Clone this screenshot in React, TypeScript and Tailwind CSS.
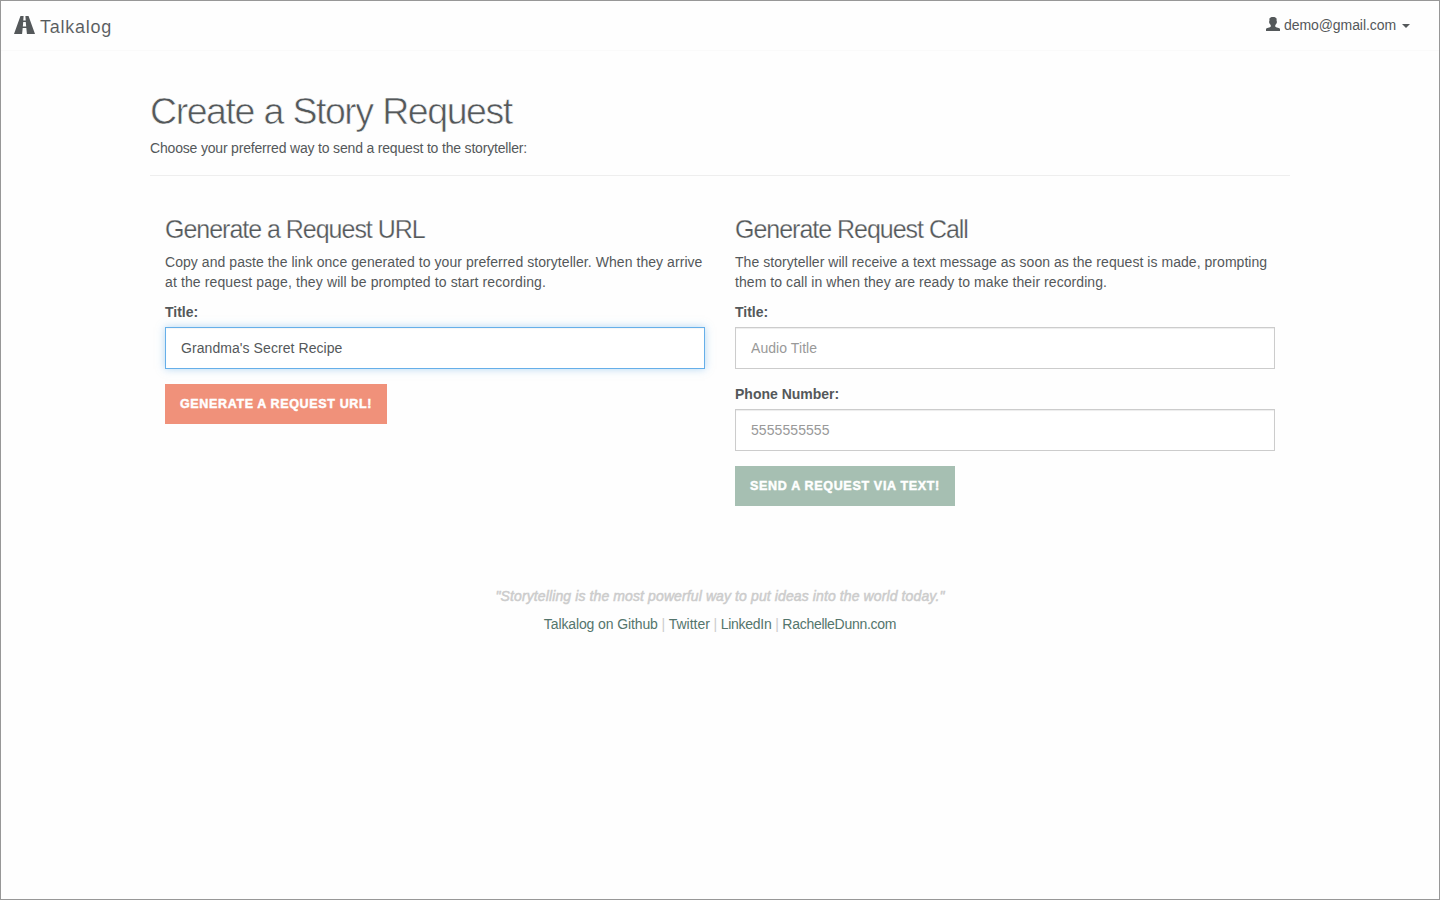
import type { ReactNode } from 'react';

const userPath =
  'M4.600 0.5C5.600 -0.100 8.400 -0.100 9.400 0.500L10.600 1.600V4.200L11 4.600L10.700 6.300L10 6.900L9.200 8.600V9.500L10.100 10.200L13.400 11.300L14 12.100V14H0V12.100L0.600 11.300L3.900 10.200L4.800 9.500V8.600L4 6.900L3.300 6.300L3 4.600L3.400 4.200V1.600z';

function Field({ label, children }: { label: string; children: ReactNode }) {
  return (
    <label className="mb-[15px] block">
      <span className="mb-[5px] block font-bold">{label}</span>
      {children}
    </label>
  );
}

const input =
  'block h-[42px] w-full border bg-white px-[15px] text-[14px] tracking-[0.07px] outline-none placeholder:text-[#999999]';
const idle = 'border-[#cccccc] shadow-[inset_0_1px_1px_rgba(0,0,0,0.075)]';
const focused = 'border-[#66afe9] shadow-[inset_0_1px_1px_rgba(0,0,0,0.04),0_0_8px_rgba(102,175,233,0.5)]';
const button = 'h-10 pl-[15px] text-[12.5px] font-bold text-white [-webkit-text-stroke:0.45px_#ffffff] text-left';
const heading = 'text-[25px] leading-[28px] tracking-[-1.02px] [-webkit-text-stroke:0.25px_#fefefe]';

export default function App() {
  return (
    <div className="h-[900px] w-full border border-[#979797] bg-[#fefefe] font-['Liberation_Sans',Arial,sans-serif] text-[14px] leading-[20px] text-[#54585a]">
      <header className="flex h-[50px] items-start justify-between border-b border-[#fafafa] pl-3 pr-[29px]">
        <a className="flex pt-[14px]">
          <svg className="ml-px mt-px h-[18px] w-[21px]" viewBox="-14 0 1400 1200" fill="currentColor">
            <path
              fillRule="evenodd"
              d="M-14 1200l431 -1200h209l-21 300h162l-20 -300h208l431 1200h-538l-41 -400h-242l-40 400zM574 700h224l-27 -300h-170z"
            />
          </svg>
          <span className="ml-[5px] mt-[2px] text-[18px] tracking-[0.75px] [-webkit-text-stroke:0.1px_#fefefe]">Talkalog</span>
        </a>
        <a className="flex items-start pt-[14px]">
          <svg className="mt-[2px] h-[14px] w-[14px]" viewBox="0 0 14 14" fill="currentColor">
            <path d={userPath} />
          </svg>
          <span className="ml-1 tracking-[-0.07px]">demo@gmail.com</span>
          <span className="ml-[6px] mt-[9px] border-x-4 border-t-4 border-x-transparent border-t-[#54585a]" />
        </a>
      </header>
      <main className="mx-auto w-[1140px]">
        <div className="h-[125px] border-b border-[#eeeeee] pt-[39px]">
          <h1 className="text-[37.5px] leading-[42px] tracking-[-1.45px] [word-spacing:0.6px] [-webkit-text-stroke:0.6px_#fefefe]">
            Create a Story Request
          </h1>
          <p className="mt-[6px] tracking-[-0.18px]">Choose your preferred way to send a request to the storyteller:</p>
        </div>
        <div className="grid grid-cols-2 gap-[30px] px-[15px] pt-[39px]">
          <section>
            <h2 className={heading}>Generate a Request URL</h2>
            <p className="mb-[10px] mt-[9px] whitespace-nowrap">
              <span className="tracking-[0.06px]">
                Copy and paste the link once generated to your preferred storyteller. When they arrive
              </span>
              <br />
              <span className="tracking-[0.12px]">at the request page, they will be prompted to start recording.</span>
            </p>
            <Field label="Title:">
              <input className={`${input} ${focused}`} defaultValue="Grandma's Secret Recipe" />
            </Field>
            <button className={`${button} w-[222px] bg-[#f0917a] tracking-[0.64px]`}>GENERATE A REQUEST URL!</button>
          </section>
          <section>
            <h2 className={heading}>Generate Request Call</h2>
            <p className="mb-[10px] mt-[9px] whitespace-nowrap">
              <span className="tracking-[0.045px]">
                The storyteller will receive a text message as soon as the request is made, prompting
              </span>
              <br />
              <span className="tracking-[0.065px]">them to call in when they are ready to make their recording.</span>
            </p>
            <Field label="Title:">
              <input className={`${input} ${idle}`} placeholder="Audio Title" />
            </Field>
            <Field label="Phone Number:">
              <input className={`${input} ${idle}`} placeholder="5555555555" />
            </Field>
            <button className={`${button} w-[220px] bg-[#a6bfb2] tracking-[0.68px]`}>SEND A REQUEST VIA TEXT!</button>
          </section>
        </div>
      </main>
      <footer className="mt-[80px] text-center text-[#cccccc]">
        <p className="italic tracking-[0.11px] [-webkit-text-stroke:0.5px_#cccccc]">
          "Storytelling is the most powerful way to put ideas into the world today."
        </p>
        <p className="mt-2 tracking-[-0.2px]">
          <a className="tracking-[-0.11px] text-[#54756c]">Talkalog on Github</a> |{' '}
          <a className="tracking-normal text-[#54756c]">Twitter</a> |{' '}
          <a className="tracking-[-0.27px] text-[#54756c]">LinkedIn</a> |{' '}
          <a className="tracking-[-0.28px] text-[#54756c]">RachelleDunn.com</a>
        </p>
      </footer>
    </div>
  );
}
